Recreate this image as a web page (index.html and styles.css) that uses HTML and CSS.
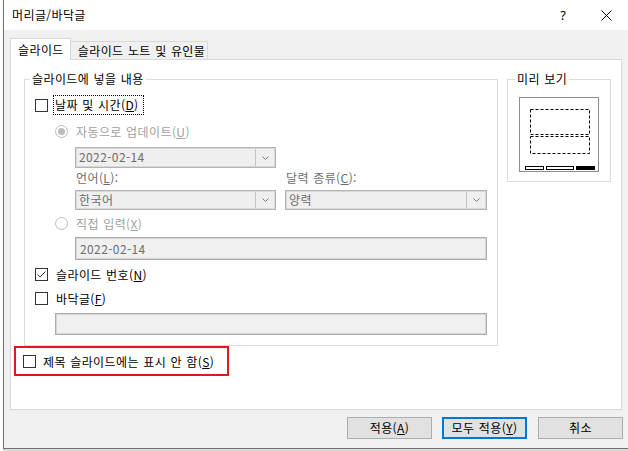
FILE: index.html
```html
<!DOCTYPE html>
<html lang="ko">
<head>
<meta charset="utf-8">
<title>머리글/바닥글</title>
<link rel="stylesheet" href="styles.css">
</head>
<body>
<div class="window">
  <div class="titlebar">
    <span class="title">머리글/바닥글</span>
    <span class="help">?</span>
    <span class="close"><svg width="11" height="11" viewBox="0 0 11 11"><path d="M0.5 0.5L10.5 10.5M10.5 0.5L0.5 10.5" stroke="#000" stroke-width="1" fill="none"/></svg></span>
  </div>
  <div class="body">
    <div class="tabs">
      <div class="tab active">슬라이드</div>
      <div class="tab second">슬라이드 노트 및 유인물</div>
    </div>
    <div class="panel">
      <div class="left">
        <fieldset class="group main">
          <legend>슬라이드에 넣을 내용</legend>
          <div class="main-body">
            <div class="row r-date"><span class="check"></span><span class="focus">날짜 및 시간(<u>D</u>)</span></div>
            <div class="row r-auto disabled"><span class="radio on"></span><span>자동으로 업데이트(<u>U</u>)</span></div>
            <div class="combo sel1"><span class="val">2022-02-14</span><span class="btn"><svg width="7" height="4" viewBox="0 0 7 4"><path d="M0.5 0.5L3.5 3.5L6.5 0.5" stroke="#7a7a7a" fill="none"/></svg></span></div>
            <div class="labels"><span>언어(<u>L</u>):</span><span>달력 종류(<u>C</u>):</span></div>
            <div class="combos">
              <div class="combo"><span class="val">한국어</span><span class="btn"><svg width="7" height="4" viewBox="0 0 7 4"><path d="M0.5 0.5L3.5 3.5L6.5 0.5" stroke="#7a7a7a" fill="none"/></svg></span></div>
              <div class="combo"><span class="val">양력</span><span class="btn"><svg width="7" height="4" viewBox="0 0 7 4"><path d="M0.5 0.5L3.5 3.5L6.5 0.5" stroke="#7a7a7a" fill="none"/></svg></span></div>
            </div>
            <div class="row r-manual disabled"><span class="radio"></span><span>직접 입력(<u>X</u>)</span></div>
            <div class="field input1">2022-02-14</div>
            <div class="row r-num"><span class="check checked"><svg width="11" height="11" viewBox="0 0 11 11"><path d="M1.5 5.5L4 8L9.5 2.5" stroke="#333" stroke-width="1" fill="none"/></svg></span><span class="lbl">슬라이드 번호(<u>N</u>)</span></div>
            <div class="row r-footer"><span class="check"></span><span class="lbl">바닥글(<u>F</u>)</span></div>
            <div class="field input2"></div>
          </div>
        </fieldset>
        <div class="note"><span class="check"></span><span>제목 슬라이드에는 표시 안 함(<u>S</u>)</span></div>
      </div>
      <fieldset class="group preview">
        <legend>미리 보기</legend>
        <div class="thumb">
          <svg width="80" height="75" viewBox="0 0 80 75">
            <rect x="0.5" y="0.5" width="79" height="74" fill="#fff" stroke="#8c8c8c"/>
            <rect x="11.5" y="12.5" width="59" height="25" fill="none" stroke="#000" stroke-dasharray="3 2"/>
            <rect x="11.5" y="39.5" width="59" height="17" fill="none" stroke="#000" stroke-dasharray="3 2"/>
            <rect x="6.5" y="69.5" width="18" height="3" fill="#fff" stroke="#000"/>
            <rect x="27.5" y="69.5" width="27" height="3" fill="#fff" stroke="#000"/>
            <rect x="57" y="69" width="19" height="4" fill="#000"/>
          </svg>
        </div>
      </fieldset>
    </div>
    <div class="buttons">
      <div class="button b-apply">적용(<u>A</u>)</div>
      <div class="button default b-all">모두 적용(<u>Y</u>)</div>
      <div class="button">취소</div>
    </div>
  </div>
</div>
</body>
</html>
```

FILE: styles.css
```css
* { box-sizing: border-box; }
html, body { margin: 0; padding: 0; }
body {
  width: 628px;
  height: 451px;
  overflow: hidden;
  background: #fff;
  font-family: "Noto Sans CJK KR", "Malgun Gothic", sans-serif;
  font-size: 12px;
  letter-spacing: 0.4px;
  word-spacing: 0.6px;
  color: #000;
}
u { text-decoration: underline; text-underline-offset: 1px; }

.window {
  margin-left: 3px;
  width: 625px;
  height: 449px;
  border-left: 1px solid #707070;
  border-bottom: 1px solid #707070;
  display: flex;
  flex-direction: column;
  box-shadow: 0 2px 1px rgba(0, 0, 0, 0.15);
}
.titlebar {
  height: 30px;
  flex: none;
  background: #fff;
  display: flex;
  align-items: center;
  padding: 0 16px 0 8px;
}
.title { line-height: 16px; }
.help {
  margin-left: auto;
  margin-right: 35px;
  font-family: "Noto Sans", sans-serif;
  font-size: 13px;
  line-height: 16px;
  letter-spacing: 0;
}
.close svg { display: block; }

.body {
  flex: 1;
  background: #f0f0f0;
  padding: 8px 5px 0 6px;
  display: flex;
  flex-direction: column;
}
.tabs {
  display: flex;
  align-items: flex-end;
  height: 22px;
  flex: none;
}
.tab {
  height: 19px;
  padding: 0 7px;
  border: 1px solid #d9d9d9;
  border-bottom: none;
  line-height: 18px;
  background: #f0f0f0;
  margin-left: -1px;
  white-space: nowrap;
}
.tab.second { padding-right: 2px; }
.tab.active {
  height: 22px;
  margin-left: 0;
  padding-right: 6px;
  background: #fff;
  position: relative;
  z-index: 1;
  line-height: 21px;
}
.panel {
  margin-top: -1px;
  margin-right: 1px;
  height: 351px;
  flex: none;
  background: #fff;
  border: 1px solid #d9d9d9;
  display: flex;
  align-items: flex-start;
  padding: 11px 0 0 3px;
}

fieldset {
  margin: 0;
  padding: 0;
  border: 1px solid #dcdcdc;
  min-width: 0;
}
legend {
  padding: 0 2px;
  margin-left: 5px;
  line-height: 16px;
  white-space: nowrap;
}
.left { display: flex; flex-direction: column; }
.main { margin-left: 10px; width: 474px; }
.main-body { padding: 0 0 10px 10px; }

.row { display: flex; align-items: center; height: 20px; white-space: nowrap; }
.disabled { color: #a0a0a0; }
.check {
  width: 13px;
  height: 13px;
  border: 1px solid #333;
  background: #fff;
  flex: none;
  display: flex;
  align-items: center;
  justify-content: center;
}
.check svg { display: block; }
.focus {
  margin-left: 5px;
  border: 1px dotted #000;
  padding: 0 4px 0 1px;
  height: 20px;
  line-height: 18px;
}
.lbl { margin-left: 8px; }
.r-date { margin-top: 8px; }
.r-auto { margin-top: 6px; padding-left: 20px; }
.r-manual { margin-top: 3px; padding-left: 20px; }
.r-num { margin-top: 4px; }
.r-footer { margin-top: 4px; }
.radio {
  width: 13px;
  height: 13px;
  border-radius: 50%;
  border: 1px solid #bcbcbc;
  margin-right: 8px;
  flex: none;
  display: flex;
  align-items: center;
  justify-content: center;
  background: #fff;
}
.radio.on::after {
  content: "";
  width: 7px;
  height: 7px;
  border-radius: 50%;
  background: #bcbcbc;
}

.combo {
  display: flex;
  height: 21px;
  border: 1px solid #b4b4b4;
  box-shadow: inset 0 0 0 1px #d8d8d8;
  background: #efefef;
  color: #6d6d6d;
}
.combo .val { flex: 1; padding-left: 3px; line-height: 18px; white-space: nowrap; }
.combo .btn {
  width: 19px;
  border-left: 1px solid #c4c4c4;
  margin: 1px 1px 1px 0;
  display: flex;
  align-items: center;
  justify-content: center;
}
.combo .btn svg { display: block; }
.sel1 { margin: 6px 0 0 40px; width: 201px; }
.labels {
  display: grid;
  grid-template-columns: 201px 202px;
  column-gap: 9px;
  margin: 2px 0 0 40px;
  height: 16px;
  line-height: 16px;
  color: #6d6d6d;
  white-space: nowrap;
}
.labels span { padding-left: 1px; }
.combos {
  display: grid;
  grid-template-columns: 201px 202px;
  column-gap: 9px;
  margin: 4px 0 0 40px;
}
.combos .combo { height: 20px; }
.combos .combo .val { line-height: 17px; }

.field {
  border: 1px solid #acacac;
  box-shadow: inset 0 0 0 1px #d6d6d6;
  background: #f0f0f0;
  color: #6d6d6d;
  padding-left: 4px;
}
.input1 { margin: 4px 0 0 40px; width: 412px; height: 23px; line-height: 21px; }
.input2 { margin: 5px 0 0 20px; width: 432px; height: 22px; }

.note {
  width: 215px;
  height: 30px;
  border: 2px solid #e3161d;
  display: flex;
  align-items: center;
  padding-left: 7px;
  white-space: nowrap;
}
.note .check { margin-right: 7px; }

.preview { margin-left: 9px; width: 104px; }
.preview legend { margin-left: 7px; }
.thumb { margin: 10px 0 9px 11px; }
.thumb svg { display: block; }

.buttons {
  display: flex;
  justify-content: flex-end;
  margin-top: 7px;
  flex: none;
}
.button {
  width: 85px;
  height: 22px;
  border: 1px solid #adadad;
  background: #e1e1e1;
  display: flex;
  align-items: center;
  justify-content: center;
  line-height: 16px;
  white-space: nowrap;
}
.button.default { border: 2px solid #0078d7; }
.b-apply { margin-right: 10px; }
.b-all { margin-right: 11px; }
```
